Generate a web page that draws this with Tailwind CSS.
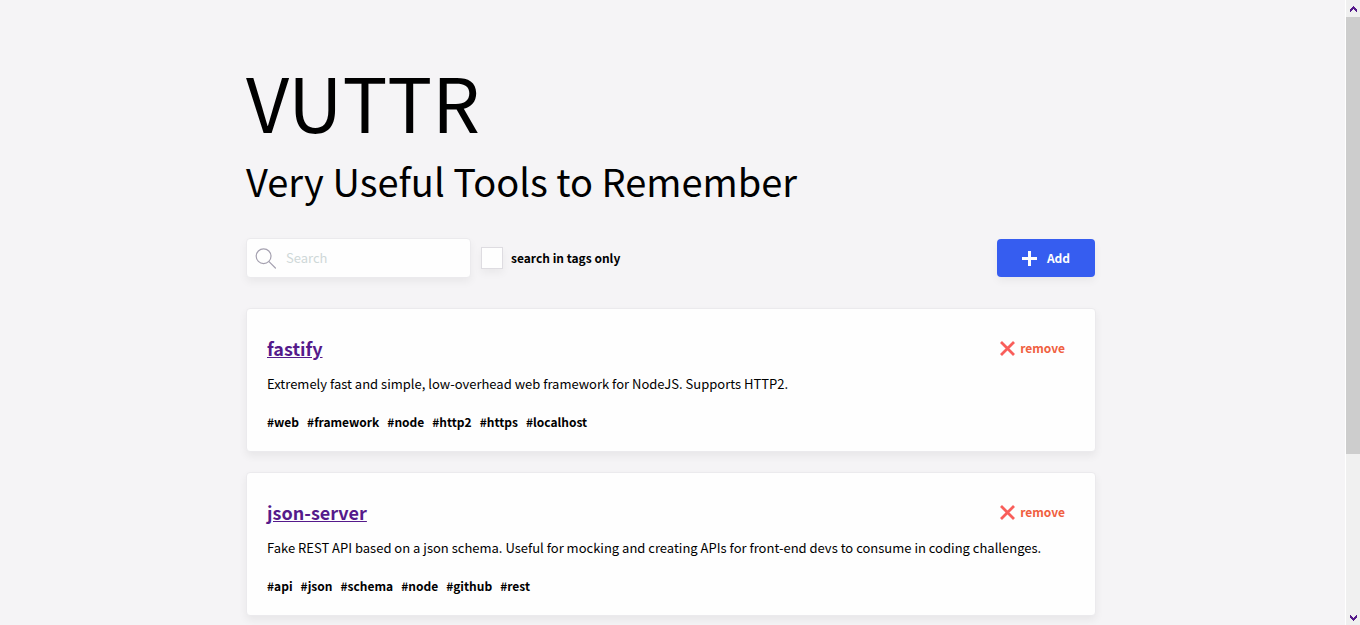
<!DOCTYPE html>
<html lang="en">
<head>
<meta charset="utf-8">
<meta name="viewport" content="width=device-width, initial-scale=1">
<title>VUTTR</title>
<script src="https://cdn.jsdelivr.net/npm/@tailwindcss/browser@4"></script>
</head>
<body class="flex h-screen overflow-hidden bg-[#f5f4f6] font-['Noto_Sans_CJK_SC',sans-serif] text-[13px] leading-5 text-black">
  <div class="min-w-0 flex-1 overflow-hidden">
    <main class="mx-auto max-w-[850px] pt-[51px]">
      <h1 class="text-[75px] leading-[100px]">VUTTR</h1>
      <h2 class="text-[38px] leading-[60px]">Very Useful Tools to Remember</h2>

      <div class="mt-[27px] flex items-center">
        <label class="flex h-10 w-[225px] items-center gap-[10px] rounded border border-[#ebeaed] bg-[#fefefe] px-2 shadow-[0_4px_8px_rgba(0,0,0,0.05)]">
          <svg class="size-[21px] shrink-0" viewBox="0 0 21 21" fill="none" stroke="#a5a1b0" stroke-width="1.2" stroke-linecap="round" aria-hidden="true"><circle cx="8.6" cy="8.2" r="7.4"/><path d="M14 13.600L20.400 20"/></svg>
          <input type="text" aria-label="Search" placeholder="Search" class="min-w-0 flex-1 outline-none placeholder:text-[#cfd8d8]">
        </label>
        <label class="ml-[10px] flex items-center gap-2 text-xs leading-5 font-bold">
          <input type="checkbox" class="size-[22px] appearance-none border border-[#dedce1] bg-[#fefefe] shadow-[0_4px_8px_rgba(0,0,0,0.05)]">
          search in tags only
        </label>
        <button type="button" class="mr-px ml-auto flex h-[38px] w-[98px] items-center justify-center gap-[10px] rounded bg-[#365df0] text-xs leading-5 font-bold text-[#fefefe] shadow-[0_4px_8px_rgba(0,0,0,0.05)]">
          <svg class="size-[15px]" viewBox="0 0 15 15" fill="currentColor" aria-hidden="true"><path d="M6 0h3v6h6v3H9v6H6V9H0V6h6z"/></svg>
          Add
        </button>
      </div>

      <article class="mt-[30px] rounded border border-[#ebeaed] bg-[#fefefe] px-5 pt-[25px] pb-[19px] shadow-[0_4px_8px_rgba(0,0,0,0.06)]">
        <div class="flex items-center justify-between">
          <h3 class="text-lg leading-7 font-bold"><a href="#" class="text-[#551a8b] underline">fastify</a></h3>
          <button type="button" class="mr-[10px] flex items-center gap-[5px] text-xs leading-5 font-bold text-[#f0603f]">
            <svg class="size-[15px]" viewBox="0 0 15 15" fill="none" stroke="#f95e5a" stroke-width="2.8" aria-hidden="true"><path d="M1 1l13 13M14 1L1 14"/></svg>
            remove
          </button>
        </div>
        <p class="mt-3">Extremely fast and simple, low-overhead web framework for NodeJS. Supports HTTP2.</p>
        <ul class="mt-[18px] flex gap-2 text-xs leading-5 font-bold">
          <li>#web</li><li>#framework</li><li>#node</li><li>#http2</li><li>#https</li><li>#localhost</li>
        </ul>
      </article>

      <article class="mt-5 rounded border border-[#ebeaed] bg-[#fefefe] px-5 pt-[25px] pb-[19px] shadow-[0_4px_8px_rgba(0,0,0,0.06)]">
        <div class="flex items-center justify-between">
          <h3 class="text-lg leading-7 font-bold"><a href="#" class="text-[#551a8b] underline">json-server</a></h3>
          <button type="button" class="mr-[10px] flex items-center gap-[5px] text-xs leading-5 font-bold text-[#f0603f]">
            <svg class="size-[15px]" viewBox="0 0 15 15" fill="none" stroke="#f95e5a" stroke-width="2.8" aria-hidden="true"><path d="M1 1l13 13M14 1L1 14"/></svg>
            remove
          </button>
        </div>
        <p class="mt-3">Fake REST API based on a json schema. Useful for mocking and creating APIs for front-end devs to consume in coding challenges.</p>
        <ul class="mt-[18px] flex gap-2 text-xs leading-5 font-bold">
          <li>#api</li><li>#json</li><li>#schema</li><li>#node</li><li>#github</li><li>#rest</li>
        </ul>
      </article>
    </main>
  </div>

  <!-- Scroll bar -->
  <div class="ml-[3px] flex w-[15px] shrink-0 flex-col border-l border-white bg-[#f0f0f0] text-[#551a8b]" aria-hidden="true">
    <svg class="h-[17px] w-[14px] shrink-0" viewBox="0 0 14 17" fill="currentColor"><path d="M7 6h1v1h1v1h1v1h1v3h-1v-1h-1v-1h-1V9H7v1H6v1H5v1H4V9h1V8h1V7h1z"/></svg>
    <div class="flex min-h-0 flex-1 flex-col">
      <div class="h-[74%] bg-[#cdcdcd]"></div>
    </div>
    <svg class="h-[17px] w-[14px] shrink-0" viewBox="0 0 14 17" fill="currentColor"><path d="M7 13h1v-1h1v-1h1v-1h1V7h-1v1h-1v1h-1v1H7V9H6V8H5V7H4v3h1v1h1v1h1z"/></svg>
  </div>
</body>
</html>
